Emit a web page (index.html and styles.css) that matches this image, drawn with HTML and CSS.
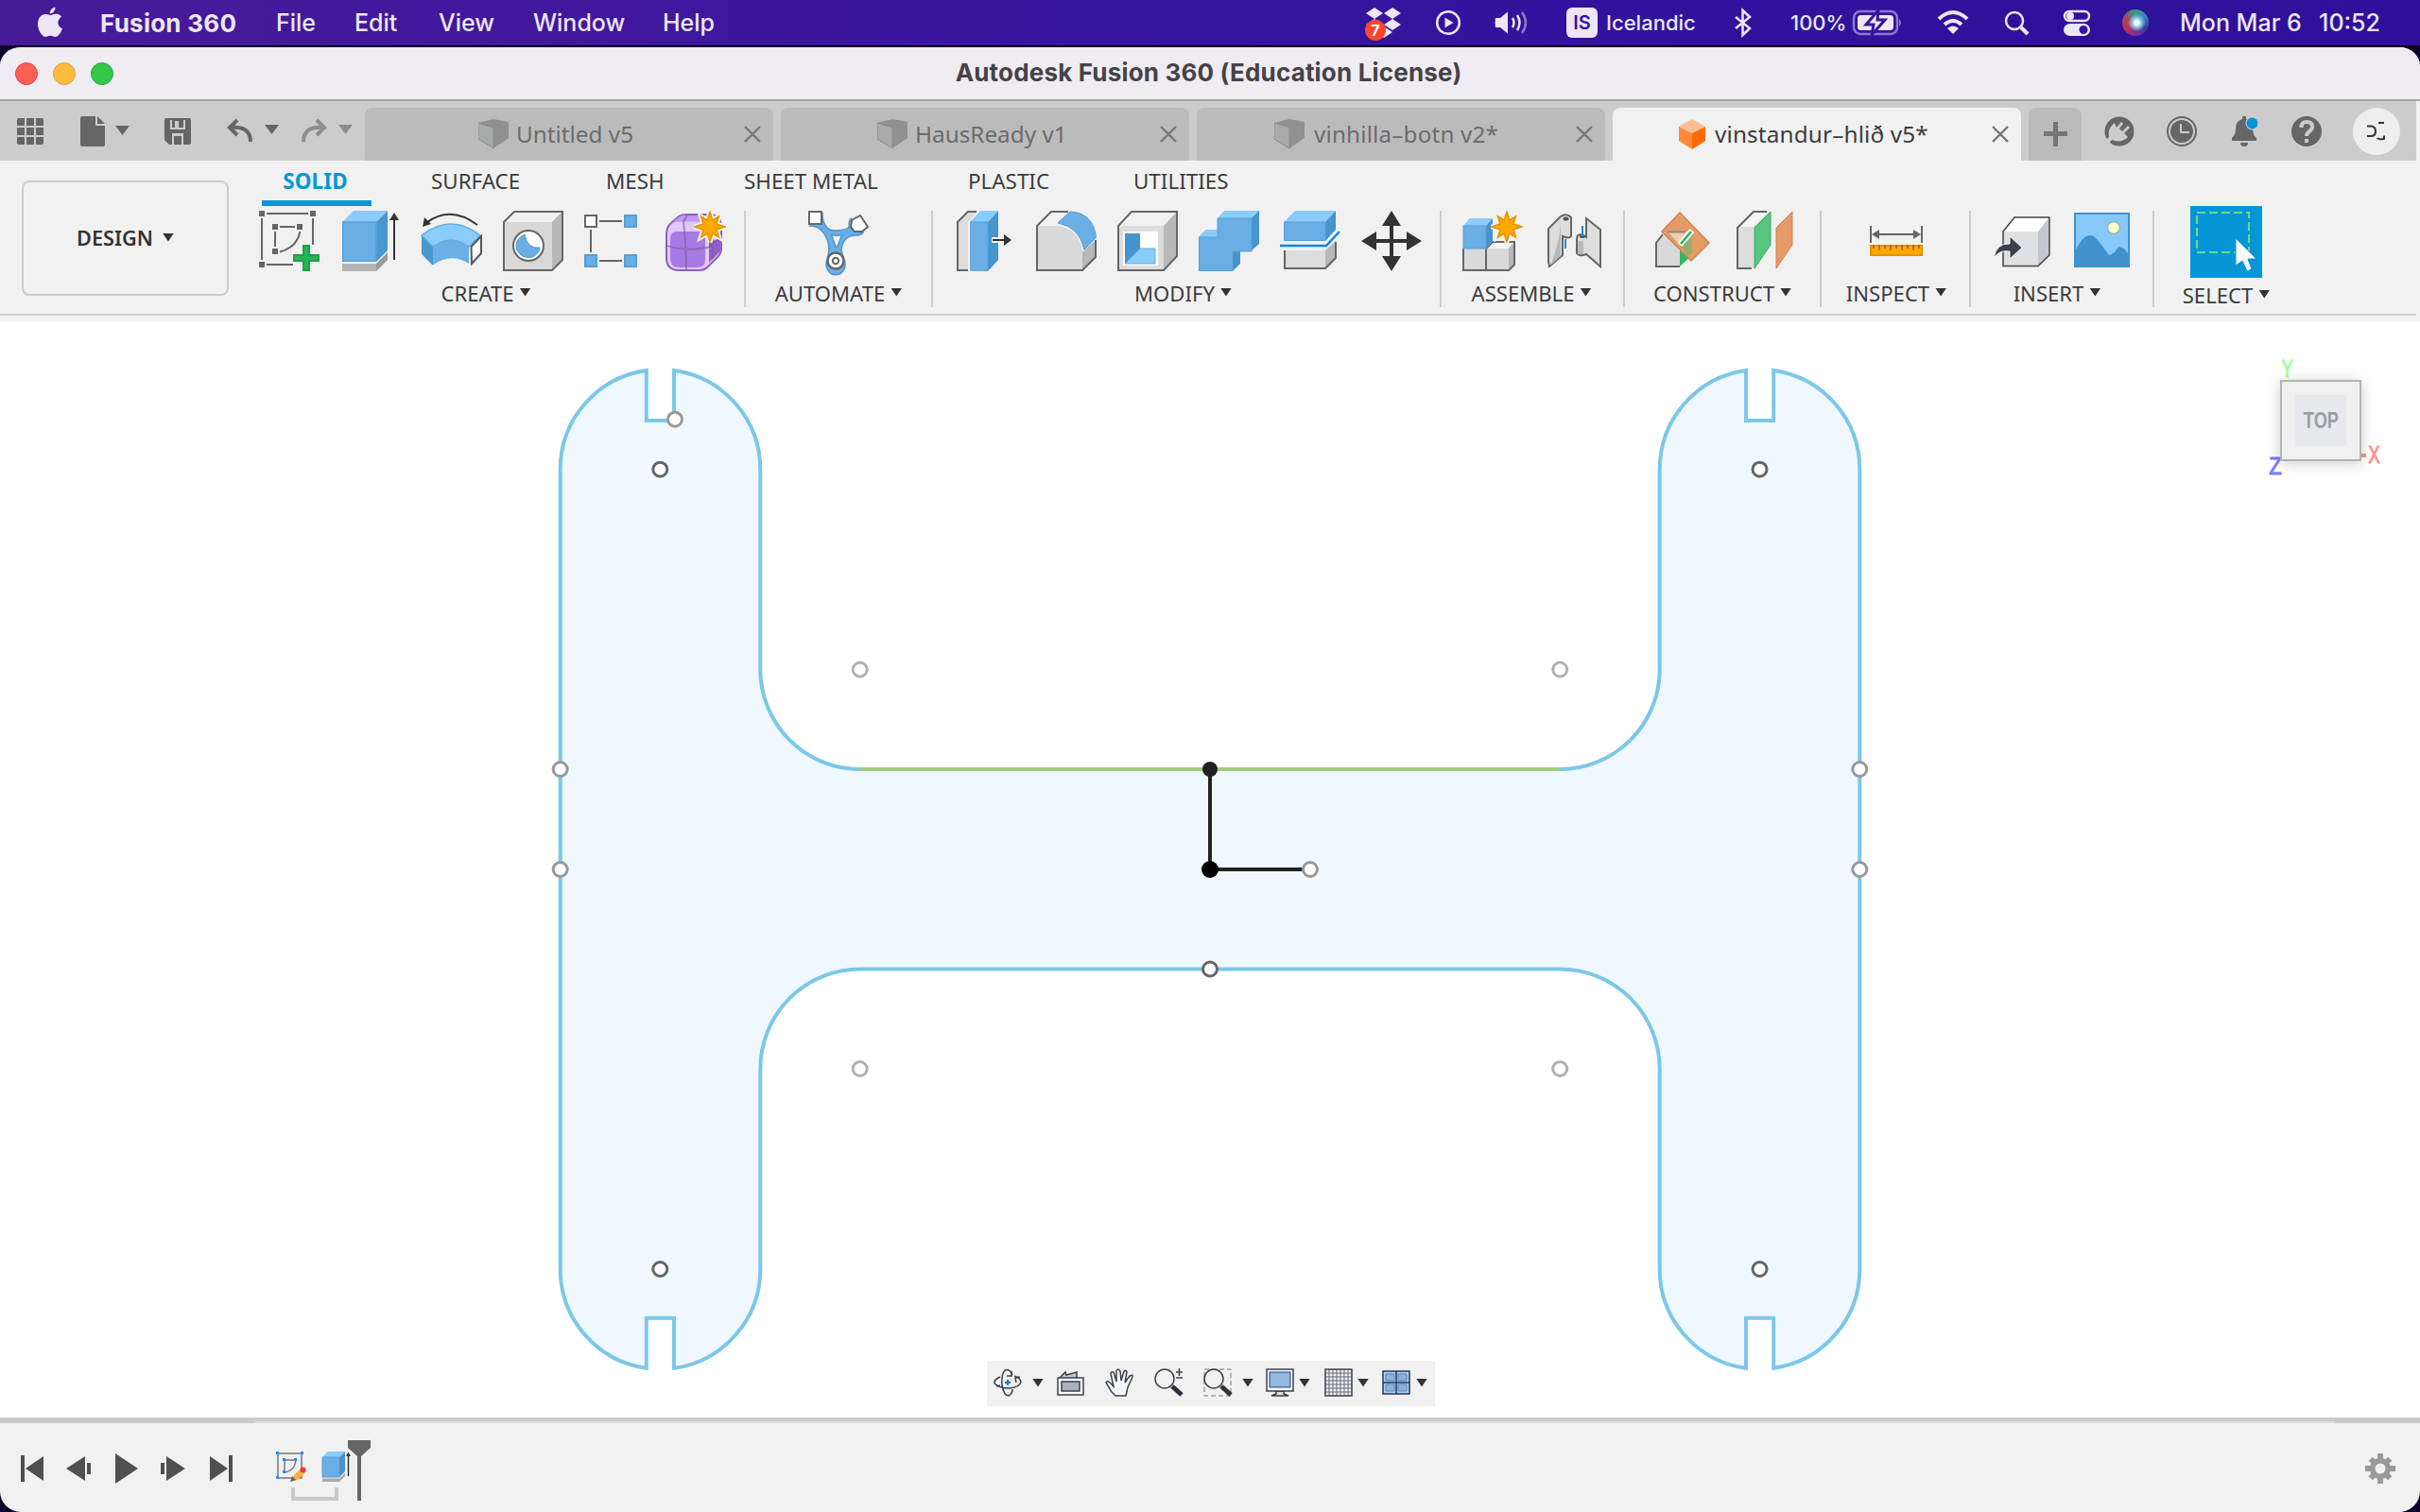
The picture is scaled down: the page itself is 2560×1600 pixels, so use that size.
FILE: index.html
```html
<!DOCTYPE html>
<html lang="en">
<head>
<meta charset="utf-8">
<title>Autodesk Fusion 360 (Education License)</title>
<link rel="stylesheet" href="styles.css">
</head>
<body>
<svg class="defs" width="0" height="0">
  <defs>
    <symbol id="star" viewBox="-17 -17 34 34"><path d="M0-16 2.800-7 9.500-11 7-3 16 0 7 3 9.500 11 2.800 7 0 16-2.800 7-9.500 11-7 3-16 0-7-3-9.500-11-2.800-7Z" fill="#f1f1f1" stroke="#f1f1f1" stroke-width="5"/><path d="M0-16 2.800-7 9.500-11 7-3 16 0 7 3 9.500 11 2.800 7 0 16-2.800 7-9.500 11-7 3-16 0-7-3-9.500-11-2.800-7Z" fill="#ffa800" stroke="#e59400" stroke-width="1.500"/></symbol>
    <symbol id="cube" viewBox="0 0 32 32"><path d="M0 4 16 0 32 3 32 20 16 31 0 21Z" fill="#909090"/><path d="M0 4 16 9 16 31 0 21Z" fill="#a9aaaa" stroke="#8c8c8c" stroke-width="1"/></symbol>
    <symbol id="close" viewBox="0 0 18 18"><path d="M1 1 17 17M17 1 1 17" stroke="#757575" stroke-width="2.300" fill="none"/></symbol>
    <linearGradient id="lens" x1="0" y1="0" x2="0" y2="1"><stop offset="0" stop-color="#cfe6e6"/><stop offset="1" stop-color="#fff"/></linearGradient>
    <linearGradient id="mesh" x1="0" y1="0" x2="0" y2="1"><stop offset="0" stop-color="#fff"/><stop offset="1" stop-color="#98a0b4"/></linearGradient>
  </defs>
</svg>

<header class="menubar">
  <svg class="apple" width="28" height="34" viewBox="0 0 28 34"><path d="M14.500 9C17 8.500 18 7.500 21 7.800 23.500 8 25 9.300 26 10.800 20.500 14.500 21.500 21 27 23.300 25 28.500 22.500 32 19.800 32 17.500 32 17 30.700 14.300 30.700 11.500 30.700 11 32 8.800 32 5 31.500 1 24.500 1 18.500 1 11.500 5 8 9 8 11.500 8 13 9.200 14.500 9ZM13.800 7.500C13.500 4 16.500.800 19.500.500 19.800 4 17 7.500 13.800 7.500Z"/></svg>
  <strong class="app">Fusion 360</strong><span>File</span><span>Edit</span><span>View</span><span>Window</span><span>Help</span>
  <svg width="42" height="40" viewBox="0 0 42 40"><path d="m11 4 9 6-9 6-9-6ZM30 4l9 6-9 6-9-6ZM11 16l9 6-9 6-9-6ZM30 16l9 6-9 6-9-6ZM21 24l9 6-9 6-9-6Z"/><circle cx="12" cy="28" r="11" fill="#ff452b"/><text x="12" y="34" class="badge">7</text></svg>
  <svg width="28" height="28" viewBox="0 0 28 28"><circle cx="13" cy="14" r="11.800" class="ln"/><path d="m9.500 8.500 9 5.500-9 5.500Z"/></svg>
  <svg width="38" height="28" viewBox="0 0 38 28"><path d="M1 9H6L14 2.500V25.500L6 19H1Q0 14 1 9Z"/><path class="ln" d="M19 9Q22 14 19 19M24 6Q29 14 24 22"/><path class="ln dim" d="M29 3Q37 14 29 25"/></svg>
  <b class="lang">IS</b>
  <span class="small">Icelandic</span>
  <svg width="20" height="28" viewBox="0 0 20 28"><path class="ln" d="M2 8 17 20 9.500 27V1L17 8 2 20"/></svg>
  <span class="small">100%</span>
  <svg width="54" height="26" viewBox="0 0 54 26"><rect x="1" y="1" width="46" height="24" rx="7" class="ln dim"/><rect x="5" y="5" width="38" height="16" rx="3.500"/><path d="M49 9Q53 13 49 17Z" class="dimf"/><path d="M27 0 14 15H22L20 26 34 10H26Z" stroke="#3417a0" stroke-width="3"/></svg>
  <svg width="34" height="26" viewBox="0 0 34 26"><path class="ln wide" d="M2 9Q17-5 32 9M8 15Q17 7 26 15"/><path d="M11 19Q17 14 23 19L17 25Z"/></svg>
  <svg width="28" height="28" viewBox="0 0 28 28"><circle cx="12" cy="12" r="9" class="ln"/><path class="ln wide" d="m19 19 7 7"/></svg>
  <svg width="30" height="28" viewBox="0 0 30 28"><rect x="2" y="2" width="26" height="10" rx="5" class="ln"/><circle cx="8" cy="7" r="4"/><rect x="1" y="15" width="28" height="13" rx="6.500"/><circle cx="22" cy="21.500" r="4.500" fill="#3315a0"/></svg>
  <i class="siri"></i>
  <span class="date">Mon Mar 6</span><span class="clock">10:52</span>
</header>

<div class="window">
  <div class="titlebar"><div class="lights"><i></i><i></i><i></i></div><h1>Autodesk Fusion 360 (Education License)</h1></div>

  <div class="tabstrip">
    <div class="quick">
      <svg width="28" height="28" viewBox="0 0 28 28"><path d="M0 2Q0 0 2 0H8V8H0ZM10 0h8v8h-8ZM20 0h6q2 0 2 2V8H20ZM0 10h8v8H0ZM10 10h8v8h-8ZM20 10h8v8h-8ZM0 20h8v8H2q-2 0-2-2ZM10 20h8v8h-8ZM20 20h8v6q0 2-2 2H20Z"/></svg>
      <svg width="52" height="32" viewBox="0 0 52 32"><path d="M2 0H16V10H26V30Q26 32 24 32H2Q0 32 0 30V2Q0 0 2 0ZM18 0 26 8H18ZM37 10H52L44.500 20Z"/></svg>
      <svg width="28" height="28" viewBox="0 0 28 28"><path fill-rule="evenodd" d="M2 0H26Q28 0 28 2V26Q28 28 26 28H5L0 23V2Q0 0 2 0ZM6 2V12H22V2ZM8 16V28H10V19H18V28H20V16Z"/><path d="M8 0H20V10H15V3H11V10H8ZM12 21h4v7h-4Z"/></svg>
      <svg width="54" height="26" viewBox="0 0 54 26"><path class="st" d="M10 1 2 9 10 17M3 9Q24 7 24 24"/><path d="M39 6H54L46.500 16Z"/></svg>
      <svg class="off" width="54" height="26" viewBox="0 0 54 26"><path class="st" d="M16 1 24 9 16 17M23 9Q2 7 2 24"/><path d="M39 6H54L46.500 16Z"/></svg>
    </div>
    <div class="tab t1"><svg width="32" height="32"><use href="#cube"/></svg><span>Untitled v5</span><svg class="x" width="18" height="18"><use href="#close"/></svg></div>
    <div class="tab t2"><svg width="32" height="32"><use href="#cube"/></svg><span>HausReady v1</span><svg class="x" width="18" height="18"><use href="#close"/></svg></div>
    <div class="tab t3"><svg width="32" height="32"><use href="#cube"/></svg><span>vinhilla–botn v2*</span><svg class="x" width="18" height="18"><use href="#close"/></svg></div>
    <div class="tab t4 active"><svg width="28" height="32" viewBox="0 0 28 32"><path d="M14 0 28 8 14 15 0 8Z" fill="#ffbd94"/><path d="M0 8 14 15V32L0 23Z" fill="#ff8a3c"/><path d="M28 8 14 15V32L28 23Z" fill="#ff6a00"/></svg><span>vinstandur–hlið v5*</span><svg class="x" width="18" height="18"><use href="#close"/></svg></div>
    <div class="plus"><svg width="26" height="26" viewBox="0 0 26 26"><path d="M11 0h5v10h10v5H16v11h-5V15H1v-5h10Z"/></svg></div>
    <div class="tools">
      <svg width="32" height="32" viewBox="0 0 32 32"><circle cx="16" cy="16" r="15.500"/><path d="M0 27 5 22Q3 13 11 7L13 12 18 6 20 8 16 13 19 16 25 10 27 12 21 18 25 22Q18 29 8 25L3 31Z" fill="#ccc"/></svg>
      <svg width="32" height="32" viewBox="0 0 32 32"><circle cx="16" cy="16" r="15" fill="none" stroke="#666" stroke-width="2"/><circle cx="16" cy="16" r="12"/><path d="M15 8V17H24" stroke="#ccc" stroke-width="2" fill="none"/></svg>
      <svg width="32" height="32" viewBox="0 0 32 32"><path d="M14 0H18V3Q25 5 25 13 25 20 29 23V26H3V23Q7 20 7 13 7 5 14 3ZM12 28h8q0 4-4 4t-4-4Z"/><circle cx="24.500" cy="7.500" r="7" fill="#ccc"/><circle cx="24.500" cy="7.500" r="6" fill="#0696d7"/></svg>
      <svg width="32" height="32" viewBox="0 0 32 32"><circle cx="16" cy="16" r="16"/><path d="M10.500 12Q10.500 6 16 6 22 6 22 11 22 14 19 16 16 18 16 21" stroke="#ccc" stroke-width="4" fill="none"/><path d="M14 24h4v4h-4Z" fill="#ccc"/></svg>
      <svg class="avatar" width="50" height="50" viewBox="0 0 50 50"><circle cx="25" cy="25" r="25" fill="#eee"/><path d="M15 19.500H19Q24 19.500 24 25 24 30 19 30H15M27 16H33M25.500 32Q27 34 33 33V29.500" fill="none" stroke="#333" stroke-width="2"/></svg>
    </div>
  </div>

  <div class="ribbon">
    <div class="workspace"><button>DESIGN<i class="car"></i></button></div>
    <div class="panel">
      <nav class="modes"><b>SOLID</b><span>SURFACE</span><span>MESH</span><span>SHEET METAL</span><span>PLASTIC</span><span>UTILITIES</span></nav>
      <div class="groups">
        <section class="g-create"><div class="icons">
          <svg viewBox="0 0 64 64"><path d="M8 3H52M3 8V52M57 8V36M8 57H36M22 17H38M17 22V38M43.500 22Q40 39 22 43.500" fill="none" stroke="#666" stroke-width="2"/><path d="M0 0h6v6H0ZM54 0h6v6h-6ZM0 54h6v6H0ZM14 14h6v6h-6ZM40 14h6v6h-6ZM14 40h6v6h-6Z" fill="#666"/><path d="M47 37h6v10h10v6H53v10h-6V53H37v-6h10Z" fill="#27b657" stroke="#1f9e48" stroke-width="2"/></svg>
          <svg viewBox="0 0 64 64"><path d="M2 12 14 0H50L38 12Z" fill="#8accfc"/><path d="M38 12 50 0V42L38 54Z" fill="#4a97d0"/><path d="M2.700 12H38V53.300H2.700Z" fill="#69afe6" stroke="#5a9fd4" stroke-width="1.400"/><path d="M2 56H38V64H2Z" fill="#b3b3b3"/><path d="M38 56 50 44V52L38 64Z" fill="#999"/><path d="M57 52V8" stroke="#333" stroke-width="2"/><path d="M57 2 62 10H52Z" fill="#333"/></svg>
          <svg viewBox="0 0 64 64"><path d="M0 26 12 38V58L0 46Z" fill="#4a97d0"/><path d="M12 38Q31 24 50 38V56Q31 44 12 57.500Z" fill="#69afe6"/><path d="M0 26Q31 2 62 26L50 38Q31 24 12 38Z" fill="#8accfc" stroke="#62abe0" stroke-width="1.500"/><path d="M52.500 38 63 27V45L53 56Z" fill="#fff" stroke="#555" stroke-width="2"/><path d="M59 15Q31-6 6 12" fill="none" stroke="#333" stroke-width="2"/><path d="M1 17 3 7 10 14Z" fill="#333"/></svg>
          <svg viewBox="0 0 64 64"><path d="M1 12 13 1H63L52 12V63H1Z" fill="#d8d8d8"/><path d="M1 12 13 1H63L52 12Z" fill="#f1f1f1"/><path d="M52 12 63 1V51L52 63Z" fill="#b8b8b8"/><path d="M1 12 12 1H63V52L52 63H1Z" fill="none" stroke="#666" stroke-width="2"/><circle cx="27" cy="37" r="16" fill="#fff" stroke="#666" stroke-width="2"/><path d="M23 25Q11 31 15 42 20 51 31 49 38 46 39 39 26 41 23 25Z" fill="#69afe6" stroke="#4a97d0"/></svg>
          <svg viewBox="0 0 64 64"><path d="M1 5h12v12H1Z" fill="#fff" stroke="#666" stroke-width="2"/><path d="M43 5h12v12H43ZM1 47h12v12H1ZM43 47h12v12H43Z" fill="#69afe6" stroke="#5a9fd4" stroke-width="2"/><path d="M16 11H40M16 53H40M7 20V44" stroke="#666" stroke-width="2"/></svg>
          <svg viewBox="0 0 64 64"><path d="M1 25Q1 18 5 14L14 6Q17 4 22 4H47Q59 5 59 17V41Q59 45 55 49L44 60Q41 63 36 63H13Q1 62 1 50Z" fill="#dfc9f8" stroke="#8a62ba" stroke-width="2"/><path d="M10 10 17 5H47L38 12Q22 11 10 12Z" fill="#bf97fa"/><path d="M5 30Q5 22 12 22H34Q42 22 42 30V52Q42 60 34 60H14Q5 60 5 50Z" fill="#a77be4"/><path d="M46 34 59 28V42L46 55Z" fill="#8f62c8"/><path d="M1 37Q20 43 45 39L59 28M23 4 19 12Q22 38 22 62M50 24V51" fill="none" stroke="#80599f" stroke-width="1.800" opacity=".65"/><use href="#star" x="30" y="0" width="34" height="34"/></svg>
        </div><h2>CREATE<i class="car"></i></h2></section>
        <section class="g-auto"><div class="icons">
          <svg viewBox="0 0 64 64"><path d="M15 3C15 14 20 21 28 21S42 20 44 16L48 22 58 23Q56 26 50 26C40 26 36 32 35 42L38 52A10 11 0 1 1 20 52L22 42C22 28 14 16 2 16Z" fill="#69afe6" stroke="#4a97d0" stroke-width="1.500"/><path d="M44 18Q42 12 46 8" fill="none" stroke="#4a97d0" stroke-width="2"/><path d="M24.500 25.500Q30 27 35.500 25.500L31 38 29 38Z" fill="#f1f1f1" stroke="#4a97d0" stroke-width="1.500"/><path d="M1 1H14V14H1ZM46 10 55 5 63 17 57 22 49 22 45 17Z" fill="#fff" stroke="#666" stroke-width="2"/><circle cx="29" cy="53" r="8.500" fill="#fff" stroke="#666" stroke-width="2.500"/><circle cx="29" cy="53" r="3.200" fill="none" stroke="#666" stroke-width="2"/></svg>
        </div><h2>AUTOMATE<i class="car"></i></h2></section>
        <section class="g-modify"><div class="icons">
          <svg viewBox="0 0 64 64"><path d="M14 63H3V12L14 1H24L14 12Z" fill="#ddd"/><path d="M14 63H3V12L14 1H23" fill="none" stroke="#666" stroke-width="2"/><path d="M16 12 27 0H46L35 12Z" fill="#8accfc"/><path d="M35 12 46 0V52L35 64Z" fill="#4593cf"/><path d="M16.700 12H35V63.300H16.700Z" fill="#69afe6" stroke="#5a9fd4"/><path d="M39 28H50V22L62 31 50 40V34H39Z" fill="#f1f1f1"/><path d="M40 30H52V25L60 31 52 37V32H40Z" fill="#333"/></svg>
          <svg viewBox="0 0 64 64"><path d="M1 16H18Q44 16 49 42L63 31V49L49 63H1Z" fill="#d9d9d9"/><path d="M49 44 63 31V49L49 63Z" fill="#b8b8b8"/><path d="M1 16 16 1H34L22 16Z" fill="#f1f1f1"/><path d="M34 1H16L1 16V63H49L63 49V31" fill="none" stroke="#666" stroke-width="2"/><path d="M23 13 36 1Q60 2 63.500 28L51 41Q46 17 23 13Z" fill="#69afe6" stroke="#4a97d0"/></svg>
          <svg viewBox="0 0 64 64"><path d="M1 16 15 1H63V48L49 63H1Z" fill="#dcdcdc"/><path d="M1 16 15 1H63L49 16Z" fill="#f1f1f1"/><path d="M49 16 63 1V48L49 63Z" fill="#b8b8b8"/><path d="M1 16 15 1H63V48L49 63H1Z" fill="none" stroke="#666" stroke-width="2"/><path d="M6 22H43V58H6Z" fill="#fff"/><path d="M8 24H24V40L8 56Z" fill="#4593cf"/><path d="M24 40H40V56H8Z" fill="#8accfc" stroke="#62abe0"/></svg>
          <svg viewBox="0 0 64 64"><path d="M0 28 8 20H20V8L28 0H64V35L55 43H44V56L36 64H0Z" fill="#4593cf"/><path d="M0 28 8 20H20V28ZM20 8 28 0H64L56 8Z" fill="#8accfc"/><path d="M.500 28H20V8H56V43H36V63.500H.500Z" fill="#69afe6" stroke="#5a9fd4"/></svg>
          <svg viewBox="0 0 64 64"><path d="M4 12 16 0H59L48 12Z" fill="#8accfc"/><path d="M48 12 59 0V20L48 32Z" fill="#4593cf"/><path d="M4.500 12H48V31.500H4.500Z" fill="#69afe6" stroke="#5a9fd4"/><path d="M5 42H48L59 32V50L48 61H5Z" fill="#dcdcdc"/><path d="M48 42 59 32V50L48 61Z" fill="#b8b8b8"/><path d="M5 42V61H48L59 50V33" fill="none" stroke="#666" stroke-width="2"/><path d="M0 37H49L63 22" fill="none" stroke="#0d88e6" stroke-width="2.500"/></svg>
          <svg viewBox="0 0 64 64"><path d="M32 0 42 16H34V30H48V22L64 32 48 42V34H34V48H42L32 64 22 48H30V34H16V42L0 32 16 22V30H30V16H22Z" fill="#333"/></svg>
        </div><h2>MODIFY<i class="car"></i></h2></section>
        <section class="g-asm"><div class="icons">
          <svg viewBox="0 0 64 64"><path d="M3 40H27L34 33H57V56L51 63H3Z" fill="#d9d9d9"/><path d="M27 40 34 33H57L51 40Z" fill="#f5f5f5"/><path d="M51 40 57 33V56L51 63Z" fill="#b8b8b8"/><path d="M3 40V63H51L57 57V33H34L27 40V63" fill="none" stroke="#666" stroke-width="2"/><path d="M3 16 10 8H34L27 16Z" fill="#8accfc"/><path d="M27 16 34 8V33L27 40Z" fill="#4593cf"/><path d="M3 16H27V40H3Z" fill="#69afe6" stroke="#5a9fd4"/><use href="#star" x="32" y="0" width="34" height="34"/></svg>
          <svg viewBox="0 0 64 64"><path d="M7 19 20 6Q26 2 31 7V27Q29 30 22 27V47L8 59 7 54Z" fill="#ddd" stroke="#666" stroke-width="2"/><path d="M20 9V48L9 58Q20 30 20 9Z" fill="#b8b8b8"/><ellipse cx="25.500" cy="8.500" rx="3" ry="2" fill="#555"/><path d="M62 20 47 8V28Q38 22 37 29V45Q40 49 47 46L62 59Z" fill="#ddd" stroke="#666" stroke-width="2"/><path d="M38 32h6v14h-6Z" fill="#b8b8b8"/><ellipse cx="43" cy="27" rx="3" ry="2" fill="#555"/><path d="M25 30V40M43 16V27" stroke="#1a8de0" stroke-width="2"/></svg>
        </div><h2>ASSEMBLE<i class="car"></i></h2></section>
        <section class="g-con"><div class="icons">
          <svg viewBox="0 0 64 64"><path d="M30 59H5V35L15 23H44L30 38Z" fill="#d9d9d9"/><path d="M30 59H5V34L12 25" fill="none" stroke="#666" stroke-width="2"/><path d="M30 38 40 50 30 59Z" fill="#34b864"/><path d="M30 2 61 34 42 53 11 22Z" fill="#e69a66" stroke="#cf8452" stroke-width="1.500"/><path d="M17 22H43L30 36Z" fill="#f0cdb5"/><path d="M17 22.500H36" stroke="#888" stroke-width="2"/><path d="M30 36 43 24V45L39 48Z" fill="#92af6e"/><path d="M30 36 43 21" stroke="#fff" stroke-width="6"/><path d="M31 35 42 22" stroke="#27b657" stroke-width="2.500"/></svg>
          <svg viewBox="0 0 64 64"><path d="M5 18 22 1H39L22 18V61H5Z" fill="#ddd"/><path d="M8 17 23 2H37L21 17Z" fill="#f6f6f6"/><path d="M20 61H5V18L22 1H36" fill="none" stroke="#666" stroke-width="2"/><path d="M23 18 40 1V36L23 61Z" fill="#59c67f" stroke="#36a660"/><path d="M46 18 63 1V36L46 61Z" fill="#e69a66" stroke="#cf8452"/></svg>
        </div><h2>CONSTRUCT<i class="car"></i></h2></section>
        <section class="g-insp"><div class="icons">
          <svg viewBox="0 0 64 64"><path d="M6 16V34M60 16V34M10 25H56" stroke="#666" stroke-width="2"/><path d="M7 25 15 20V30ZM59 25 51 20V30Z" fill="#666"/><path d="M6 37H60V47H6Z" fill="#ffa800" stroke="#e59400" stroke-width="2"/><path d="M9 36v4M15 36v6M21 36v4M27 36v6M33 36v4M39 36v6M45 36v4M51 36v6M57 36v4" stroke="#8a6420" stroke-width="1.500"/></svg>
        </div><h2>INSPECT<i class="car"></i></h2></section>
        <section class="g-ins"><div class="icons">
          <svg viewBox="0 0 64 64"><path d="M12 22 24 7H61V47L49 58.500H12Z" fill="#dfe0e4"/><path d="M12 22 24 7H61L49 22Z" fill="#fff"/><path d="M49 22 61 7V47L49 58.500Z" fill="#c5c7cf"/><path d="M12 22 24 7H61V47L49 58.500H12Z" fill="none" stroke="#444" stroke-width="1.500"/><path d="M2 50Q5 34 19 35V27L32 39 19 51V43Q8 41 2 50Z" fill="#3e4047" stroke="#f1f1f1"/></svg>
          <svg viewBox="0 0 64 64"><path d="M2 3H59V59H2Z" fill="#87c9fa"/><path d="M2 44Q11 22 22 27 30 35 38 47 45 45 48 38 55 38 59 48V59H2Z" fill="#3f92cc"/><path d="M2 3H59V59H2Z" fill="none" stroke="#3f92cc" stroke-width="2"/><circle cx="43" cy="18" r="6.500" fill="#ffffc8" stroke="#8fb9b0" stroke-width="1.500"/></svg>
        </div><h2>INSERT<i class="car"></i></h2></section>
        <section class="g-sel"><div class="icons">
          <svg class="big" viewBox="0 0 76 76"><path d="M0 0H76V76H0Z" fill="#0696d7"/><path d="M7 7H62V49H7Z" fill="none" stroke="#6bdc80" stroke-width="2" stroke-dasharray="9 4"/><path d="M48 34V63L55 58 60 69 65 67 61 56H70Z" fill="#fff" stroke="#0696d7" stroke-width="1"/></svg>
        </div><h2>SELECT<i class="car"></i></h2></section>
      </div>
    </div>
  </div>

  <main class="canvas">
    <svg class="sketch" width="2560" height="1160" viewBox="0 340 2560 1160">
      <path class="body" d="M683.800 391.900V445H713V391.900A105.800 105.800 0 0 1 804.300 496.700V708.500A105.600 105.600 0 0 0 909.900 814H1650.100A105.600 105.600 0 0 0 1755.700 708.500V496.700A105.800 105.800 0 0 1 1847 391.900V445H1876.200V391.900A105.800 105.800 0 0 1 1967.300 496.700V1343A105.800 105.800 0 0 1 1876.200 1447.800V1394.700H1847V1447.800A105.800 105.800 0 0 1 1755.700 1343V1131A105.600 105.600 0 0 0 1650.100 1025.500H909.900A105.600 105.600 0 0 0 804.300 1131V1343A105.800 105.800 0 0 1 713 1447.800V1394.700H683.800V1447.800A105.800 105.800 0 0 1 592.700 1343V496.700A105.800 105.800 0 0 1 683.800 391.900Z"/>
      <path d="M909.900 814H1650" stroke="#a3cd7c" stroke-width="4"/>
      <path d="M1280 814V920H1386" fill="none" stroke="#222" stroke-width="4"/>
      <circle cx="1280" cy="814" r="8" fill="#222"/><circle cx="1280" cy="920" r="9" fill="#000"/>
      <g class="pt dark"><circle cx="698.300" cy="496.700" r="7.500"/><circle cx="1861.500" cy="496.700" r="7.500"/><circle cx="698.300" cy="1343" r="7.500"/><circle cx="1861.500" cy="1343" r="7.500"/><circle cx="1280" cy="1025.500" r="7.500"/></g>
      <g class="pt mid"><circle cx="714" cy="443.700" r="7.500"/><circle cx="592.700" cy="814" r="7.500"/><circle cx="592.700" cy="920" r="7.500"/><circle cx="1967.300" cy="814" r="7.500"/><circle cx="1967.300" cy="920" r="7.500"/><circle cx="1386" cy="920" r="7.500"/></g>
      <g class="pt light"><circle cx="909.700" cy="708.500" r="7.500"/><circle cx="1650.200" cy="708.500" r="7.500"/><circle cx="909.700" cy="1131" r="7.500"/><circle cx="1650.200" cy="1131" r="7.500"/></g>
    </svg>
    <div class="viewcube"><span class="ax y">Y</span><span class="ax z">Z</span><i class="dash"></i><span class="ax xx">X</span><div class="face"><b><span>TOP</span></b></div></div>
    <div class="navbar">
      <svg width="30" height="30" viewBox="0 0 30 30"><path d="M7 9Q0 12 1 16 6 21 17 21 28 20 29 14 28 10 22 8M20 7Q17 0 12 2 8 6 9 18 11 29 16 29 20 27 20 22M7 18 3 19" class="o"/><path d="M19 3v5h-5M28 9l-5 1 1 5" class="o"/><path d="M15 12v6M12 15h6" stroke="#0078e0" stroke-width="2"/></svg><i class="car"></i>
      <svg width="30" height="30" viewBox="0 0 30 30"><path d="M3 10 9 4 10 7 21 4V10" fill="#c5c9d4" class="o"/><path d="M1 10H28V28H1Z" class="o" fill="#fff"/><path d="M5 14H24V24H5Z" class="o" fill="#aab0bd"/></svg>
      <svg width="30" height="30" viewBox="0 0 30 30"><path d="M11 29Q6 25 4 20L1 15Q2 12 6 16L9 19 6 6Q6 3 9 4L12 14V3Q13-1 16 3L17 13 20 3Q22 1 23 4L21 15 26 8Q30 6 29 9L24 20 22 29Z" class="o" fill="#f5f6fa"/></svg>
      <svg width="30" height="30" viewBox="0 0 30 30"><path d="M19 19 29 28" stroke="#2c2f3a" stroke-width="5"/><circle cx="11" cy="11" r="10" fill="url(#lens)" class="o"/><path d="M23 4h7M26.500 0v8M23 10h7" class="o"/></svg>
      <svg width="30" height="30" viewBox="0 0 30 30"><path d="M1 1H29V29H1Z" fill="none" stroke="#777" stroke-dasharray="5 3"/><path d="M19 19 29 28" stroke="#333" stroke-width="5"/><circle cx="11" cy="11" r="10" fill="url(#lens)" class="o"/></svg><i class="car"></i>
      <svg width="30" height="30" viewBox="0 0 30 30"><path d="M11 24h8v3l5 2H6l5-2Z" class="o" fill="#ddd"/><path d="M1 1H29V24H1Z" class="o" fill="#fff"/><path d="M4 4H26V20H4Z" fill="#95b7e0" stroke="#1c3f78"/></svg><i class="car"></i>
      <svg width="30" height="30" viewBox="0 0 30 30"><path d="M1 1H29V29H1Z" fill="url(#mesh)"/><path d="M5 1V29M9 1V29M13 1V29M17 1V29M21 1V29M25 1V29M1 5H29M1 9H29M1 13H29M1 17H29M1 21H29M1 25H29" stroke="#666b78"/><path d="M1 1H29V29H1Z" class="o"/></svg><i class="car"></i>
      <svg width="30" height="30" viewBox="0 0 30 30"><path d="M1 3H29V27H1Z" fill="#b3cdea" stroke="#1c3a66" stroke-width="1.500"/><path d="M4 6h9v7H4ZM17 6h9v7h-9ZM4 17h9v7H4ZM17 17h9v7h-9Z" fill="#8db2dd" stroke="#5c81b0"/><path d="M15 3V27M1 15H29" stroke="#1c3a66" stroke-width="1.500"/></svg><i class="car"></i>
    </div>
  </main>

  <footer class="timeline">
    <div class="rule"><i></i></div>
    <div class="play">
      <svg width="224" height="32" viewBox="0 0 224 32"><path d="M0 2h4v28H0ZM24 3V29L5 16ZM68 3V29L48 16ZM70 10h4v12h-4ZM100 0 124 16 100 32ZM148 10h4v12h-4ZM154 3 174 16 154 29ZM200 3 219 16 200 29ZM220 2h4v28h-4Z"/></svg>
      <svg class="feat" width="104" height="66" viewBox="288 1522 104 66"><path d="M294 1538H319V1564H294ZM301 1545H312M301 1545V1557M313 1545Q312 1556 302 1558" fill="none" stroke="#777" stroke-width="1.500"/><path d="M292 1536h3v3h-3ZM318 1536h3v3h-3ZM292 1562h3v3h-3ZM299 1543h3v3h-3ZM311 1543h3v3h-3ZM299 1556h3v3h-3Z" fill="#1890ff"/><path d="M308 1568 311 1561 318 1554 323 1558 315 1566Z" fill="#f9b43c"/><path d="M307 1568 309 1562 313 1566Z" fill="#666"/><circle cx="320.500" cy="1555.500" r="3" fill="#f0363c"/><path d="M341 1542 347 1536H365L359 1542Z" fill="#8accfc"/><path d="M359 1542 365 1536V1557L359 1563Z" fill="#4593cf"/><path d="M341 1542H359V1563H341Z" fill="#69afe6" stroke="#5a9fd4"/><path d="M341 1564.500H359L365 1558.500V1562L359 1568H341Z" fill="#aaa"/><path d="M368.500 1562V1540" stroke="#333" stroke-width="1.500"/><path d="M368.500 1536.500 371 1541H366Z" fill="#333"/><path d="M310 1574V1586H356V1574" fill="none" stroke="#c8c8c8" stroke-width="4"/><path d="M368 1524H392V1532L382 1541V1588H378V1541L368 1532Z" fill="#666"/></svg>
      <svg class="gear" width="32" height="32" viewBox="-16 -16 32 32"><g fill="#999"><path d="M-3-16h6v32h-6ZM-16-3h32v6h-32Z"/><path d="M-3-14.500h6v29h-6ZM-14.500-3h29v6h-29Z" transform="rotate(45)"/><circle r="11"/></g><circle r="5.500" fill="#f1f1f1"/></svg>
    </div>
  </footer>
</div>
</body>
</html>
```
FILE: styles.css
```css
* { box-sizing: border-box; }
body { margin: 0; width: 2560px; height: 1600px; overflow: hidden; background: #0e0328; font-family: "Noto Sans", sans-serif; color: #3c3c3c; }
.defs { display: none; }
svg { display: block; flex: none; overflow: visible; }
h1, h2 { margin: 0; font-weight: 400; }

.menubar { height: 48px; display: grid; align-items: center; white-space: nowrap; padding-left: 39px;
  grid-template-columns: 67px 186px 83px 89px 100px 137px 742px 76px 62px 76px 42px 135px 60px 66px 89px 70px 63px 63px 61px 147px 100px;
  background: linear-gradient(90deg, #471a98, #3a169f 40%, #2f139d 70%, #2d119a); color: #ece6f7;
  font: 500 25px Inter, sans-serif; }
.menubar svg { fill: #ece6f7; }
.menubar .ln { fill: none; stroke: #ece6f7; stroke-width: 2.5; }
.menubar .wide { stroke-width: 4; }
.menubar .dim { stroke: #8c78cb; }
.menubar .dimf { fill: #8c78cb; }
.badge { font: 700 16px Inter, sans-serif; text-anchor: middle; fill: #fff; }
.app { font-weight: 700; font-size: 26px; letter-spacing: .25px; }
.small { font-size: 22px; }
.lang { width: 33px; height: 32px; border-radius: 6px; background: #ece6f7; color: #3315a0; font: 600 20px/32px Inter, sans-serif; text-align: center; }
.siri { width: 28px; height: 28px; border-radius: 50%; background: radial-gradient(circle at 55% 50%, #fff 0 10%, #8fd0e8 22%, transparent 45%), conic-gradient(#2fa37f, #3c7fc0, #343a9a, #7a2f90, #c02f5c, #a04a5e, #2fa37f); }

.window { height: 1552px; border-top: 2px solid #0c0324; border-radius: 22px; overflow: hidden; background: #f1f1f1; display: flex; flex-direction: column; }
.titlebar { height: 57px; background: #efecf2; border-bottom: 2px solid #a9a7ab; display: grid; grid-template-columns: 200px 1fr 200px; align-items: center; }
.lights { display: flex; gap: 16px; padding-left: 16px; }
.lights i { width: 24px; height: 24px; border-radius: 50%; background: #fe5f57; border: 1px solid #e0443e; }
.lights i:nth-child(2) { background: #febb40; border-color: #dea034; }
.lights i:nth-child(3) { background: #34c749; border-color: #27aa35; }
h1 { font: 700 26px Inter, sans-serif; letter-spacing: .18px; text-align: center; color: #454347; padding-right: 3px; margin-top: -2px; }

.tabstrip { height: 63px; width: 2556px; background: #ccc; display: flex; align-items: flex-end; }
.quick { width: 386px; height: 63px; display: grid; grid-template-columns: 67px 89px 67px 78px 60px; padding-left: 18px; align-items: center; fill: #666; }
.quick .st { fill: none; stroke: #666; stroke-width: 4; }
.quick .off { fill: #8e8e8e; }
.quick .off .st { stroke: #8e8e8e; }
.tab { width: 432px; height: 56px; background: #bbb; border-radius: 8px 8px 0 0; margin-right: 8px; display: flex; align-items: center; font-size: 24.3px; color: #6b6b6b; white-space: nowrap; padding-right: 13px; }
.tab .x { margin-left: auto; }
.tab span { margin: -2px 0 0 8px; }
.t1 { padding-left: 120px; }
.t2 { padding-left: 102px; }
.t3 { padding-left: 82px; }
.t4 { padding-left: 70px; }
.tab.t4 span, .tab.t3 span { margin-left: 10px; letter-spacing: .15px; }
.active { background: #f1f1f1; color: #3c3c3c; }
.plus { width: 56px; height: 56px; border-radius: 8px 8px 0 0; background: #bbb; display: grid; place-items: center; fill: #757575; }
.tools { height: 63px; display: flex; align-items: center; gap: 34px; padding-left: 24px; fill: #666; }
.tools .avatar { margin-left: -1px; }

.ribbon { height: 170px; display: flex; position: relative; }
.ribbon::after { content: ""; position: absolute; left: 0; top: 162px; width: 2556px; height: 2px; background: #ccc; }
.workspace { width: 258px; padding: 21px 0 0 23px; }
.workspace button { width: 219px; height: 122px; border: 2px solid #ccc; border-radius: 8px; background: none; padding: 0 0 2px; font: 600 21.7px "Noto Sans", sans-serif; color: #333; display: flex; align-items: center; justify-content: center; }
.car { display: inline-block; width: 12px; height: 9px; background: #333; clip-path: polygon(0 0, 100% 0, 50% 100%); margin-left: 6px; }
.workspace .car { margin-left: 10px; }
.modes { height: 48px; display: grid; grid-template-columns: 179px 185px 146px 237px 175px 120px; padding-left: 19px; font-size: 22.4px; line-height: 43px; white-space: nowrap; }
.modes b { width: 116px; height: 48px; border-bottom: 6px solid #0696d7; color: #0696d7; text-align: center; letter-spacing: .2px; padding-right: 3px; }
.groups { display: flex; }
.groups section { height: 102px; margin-top: 5px; display: flex; flex-direction: column; align-items: center; border-right: 2px solid #ccc; }
.icons { height: 66px; display: flex; gap: 22px; align-items: center; }
.icons svg { width: 64px; height: 64px; }
.icons .big { width: 76px; height: 76px; }
.groups h2 { display: flex; align-items: center; font-size: 22.1px; line-height: 30px; margin-top: 8px; white-space: nowrap; }
.groups h2 .car { margin-top: -2px; }
.g-create { width: 531px; padding-right: 3px; }
.g-create h2 { padding-right: 14px; }
.g-auto { width: 198px; }
.g-modify { width: 538px; padding-left: 3px; }
.g-modify h2 { padding-right: 10px; }
.g-asm { width: 194px; padding-right: 2px; }
.g-con { width: 208px; }
.g-insp { width: 158px; }
.g-insp h2 { padding-left: 2px; }
.g-ins { width: 194px; padding-left: 2px; }
.g-ins h2 { padding-right: 12px; }
.groups .g-sel { width: 152px; border: 0; }

.canvas { height: 1160px; background: #fff; position: relative; }
.body { fill: #eff8fe; stroke: #7cc7e9; stroke-width: 4; }
.pt { fill: #fff; stroke-width: 3; }
.dark { stroke: #666; }
.mid { stroke: #999; }
.light { stroke: #b0b0b0; }
.viewcube { position: absolute; left: 2412px; top: 62px; width: 86px; height: 86px; }
.face { position: relative; width: 86px; height: 86px; padding: 14px; background: #f0f0f0; border: 2px solid #b3b3b3; box-shadow: 0 2px 14px rgba(0,0,0,.2); }
.face b { display: block; width: 54px; height: 54px; background: #e6e8ec; color: #9a9fa7; font: 700 24px/54px "Liberation Sans", sans-serif; display: flex; justify-content: center; }
.face b span { transform: scaleX(.76); }
.ax { position: absolute; font: 400 26px/24px "Liberation Sans", sans-serif; -webkit-text-stroke: 1px; transform: scaleX(.7); }
.y { left: -1px; top: -24px; color: #9cff9c; }
.z { left: -13px; top: 79px; color: #7b7bff; transform: scaleX(.85); }
.xx { left: 91px; top: 67px; color: #ff8f8f; }
.dash { position: absolute; left: 86px; top: 78px; width: 5px; height: 4px; background: #ff8f8f; }
.navbar { position: absolute; left: 1044px; top: 1100px; width: 474px; height: 48px; background: #f1f1f1; display: grid; align-items: center; padding: 0 0 2px 7px;
  grid-template-columns: 41px 26px 51px 52px 52px 41px 25px 35px 27px 35px 26px 36px 20px; }
.navbar .car { margin: 0; }
.o { stroke: #3a3f4c; stroke-width: 1.5; }
.o:not([fill]) { fill: none; }

.timeline { height: 94px; }
.rule { height: 6px; background: #cacaca; padding: 4px 90px 0 270px; }
.rule i { display: block; height: 2px; background: #dedede; }
.play { display: flex; padding: 0 26px 0 22px; align-items: flex-start; fill: #505050; }
.play > svg:first-child { margin-top: 32px; }
.feat { margin: 16px 0 0 42px; }
.gear { margin: 32px 0 0 auto; }
```
